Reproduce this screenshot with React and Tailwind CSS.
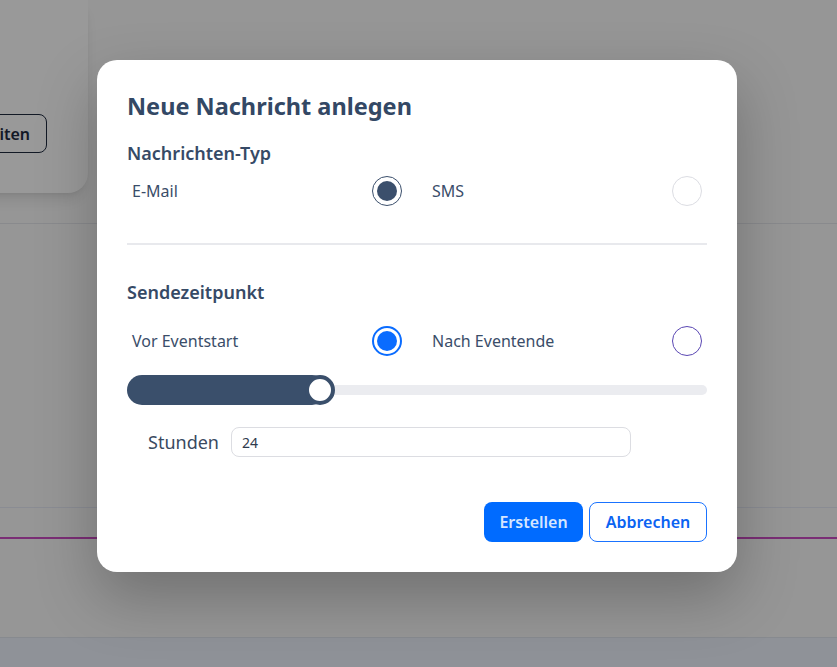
import { useState } from "react";

const Radio = ({ checked, tone = "slate", focus = false, onClick }) => {
  if (checked) {
    const ring = tone === "blue" ? "border-[#0a6cff] border-2" : "border-[#3b4f6c] border";
    const dot = tone === "blue" ? "bg-[#0a6cff]" : "bg-[#3b4f6c]";
    return (
      <button
        onClick={onClick}
        className={`w-[30px] h-[30px] rounded-full flex items-center justify-center bg-white ${ring}`}
      >
        <span className={`w-[20px] h-[20px] rounded-full ${dot}`} />
      </button>
    );
  }
  return (
    <button
      onClick={onClick}
      className={`w-[30px] h-[30px] rounded-full bg-white border ${
        focus ? "border-[#5a47b3]" : "border-[#dcdde3]"
      }`}
    />
  );
};

const App = () => {
  const [typ, setTyp] = useState("mail");
  const [zeit, setZeit] = useState("vor");
  const [stunden, setStunden] = useState("24");

  return (
    <div
      className="relative w-[837px] h-[667px] overflow-hidden bg-[#fbfbfb]"
      style={{ fontFamily: '"Noto Sans", "Open Sans", sans-serif' }}
    >
      {/* page under the overlay */}
      <div className="flex flex-col h-full">
        <div className="h-[223px] flex items-start">
          <div className="-ml-[150px] w-[238px] h-[193px] shrink-0 bg-white rounded-br-[20px] shadow-lg flex items-end justify-end pb-[40px] pr-[41px]">
            <button className="h-[39px] px-4 shrink-0 rounded-lg border border-[#1e2a3e] text-[#1e2a3e] text-base font-semibold">
              Bearbeiten
            </button>
          </div>
        </div>
        <div className="h-px bg-[#e4e6ec]" />
        <div className="h-[283px]" />
        <div className="h-px bg-[#e6eaf5]" />
        <div className="h-[29px]" />
        <div className="h-[2px] bg-[#cc4dc4]" />
        <div className="flex-1" />
        <div className="h-[30px] bg-[#eef4fe] border-t border-[#e2e6ee]" />
      </div>

      {/* overlay */}
      <div className="absolute inset-0 bg-black/40 flex justify-start pl-[97px] pt-[60px]">
        <div className="w-[640px] h-[512px] bg-white rounded-[20px] shadow-[0_25px_60px_rgba(0,0,0,0.25)] px-[30px] pt-[30px] pb-[30px] flex flex-col text-[#3a4d69]">
          <h2 className="text-[23.5px] leading-8 font-bold text-[#334865]">Neue Nachricht anlegen</h2>

          <h3 className="mt-[17px] text-[18px] leading-7 font-semibold text-[#364a66]">Nachrichten-Typ</h3>
          <div className="mt-[9px] grid grid-cols-2 gap-[30px] items-center">
            <div className="flex items-center justify-between pl-[5px]">
              <span className="text-base">E-Mail</span>
              <Radio checked={typ === "mail"} onClick={() => setTyp("mail")} />
            </div>
            <div className="flex items-center justify-between pr-[5px]">
              <span className="text-base">SMS</span>
              <Radio checked={typ === "sms"} onClick={() => setTyp("sms")} />
            </div>
          </div>

          <div className="mt-[37px] h-[2px] bg-[#e8e9ed]" />

          <h3 className="mt-[33px] text-[18px] leading-7 font-semibold text-[#364a66]">Sendezeitpunkt</h3>
          <div className="mt-[20px] grid grid-cols-2 gap-[30px] items-center">
            <div className="flex items-center justify-between pl-[5px]">
              <span className="text-base">Vor Eventstart</span>
              <Radio checked={zeit === "vor"} tone="blue" onClick={() => setZeit("vor")} />
            </div>
            <div className="flex items-center justify-between pr-[5px]">
              <span className="text-base">Nach Eventende</span>
              <Radio checked={zeit === "nach"} tone="blue" focus onClick={() => setZeit("nach")} />
            </div>
          </div>

          {/* slider */}
          <div className="mt-[19px] relative h-[30px] flex items-center">
            <div className="absolute inset-x-0 h-[10px] rounded-full bg-[#ebecf0]" />
            <div className="relative h-[30px] w-[200px] rounded-full bg-[#3a4f6b]" />
            <div className="relative -ml-[22px] w-[30px] h-[30px] rounded-full bg-white border-[4px] border-[#3a4f6b]" />
          </div>

          <div className="mt-[22px] flex items-center pl-[21px]">
            <label className="text-[18px] text-[#3a4a5f] w-[83px]">Stunden</label>
            <input
              value={stunden}
              onChange={(e) => setStunden(e.target.value)}
              className="w-[400px] h-[30px] rounded-lg border border-[#dcdde2] px-[10px] text-sm text-[#2f3b4d] outline-none"
            />
          </div>

          <div className="mt-auto flex justify-end gap-[6px]">
            <button className="h-[40px] w-[99px] rounded-lg bg-[#006bff] text-[#d4e5ff] text-base font-semibold">
              Erstellen
            </button>
            <button className="h-[40px] w-[118px] rounded-lg border border-[#1a73ff] bg-white text-[#0b63f2] text-base font-semibold">
              Abbrechen
            </button>
          </div>
        </div>
      </div>
    </div>
  );
};

export default App;
